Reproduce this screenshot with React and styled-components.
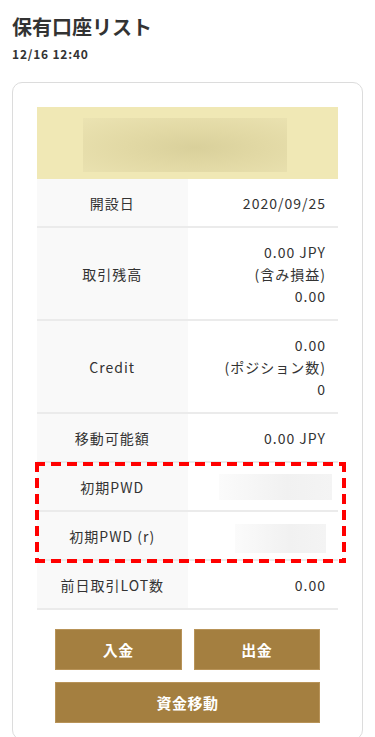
import React from "react";
import styled, { createGlobalStyle } from "styled-components";

const GlobalStyle = createGlobalStyle`
  body {
    margin: 0;
    background: #fff;
    font-family: "Noto Sans CJK JP", "Noto Sans", sans-serif;
    color: #333;
  }
`;

const Page = styled.div`
  padding: 14px 12px 20px;
`;

const Title = styled.h1`
  margin: 0;
  font-size: 20px;
  line-height: 26px;
  font-weight: 700;
  color: #333;
`;

const Stamp = styled.div`
  margin-top: 6px;
  font-size: 12px;
  line-height: 15px;
  font-weight: 700;
  letter-spacing: 0.8px;
  color: #333;
`;

const Card = styled.div`
  margin-top: 21px;
  border: 1px solid #dcdcdc;
  border-radius: 10px;
  padding: 24px 24px 16px;
`;

const Header = styled.div`
  height: 72px;
  background: #f0e8b5;
  display: flex;
  align-items: flex-start;
  padding: 11px 0 0 46px;
  box-sizing: border-box;
`;

const HeaderBlur = styled.div`
  width: 204px;
  height: 54px;
  background: radial-gradient(ellipse at 55% 55%, #d9d09b 0%, #e2d9a5 45%, #ebe3b2 100%);
`;

const Row = styled.div`
  display: grid;
  grid-template-columns: 1fr 1fr;
  border-bottom: 2px solid #ebebeb;
`;

const Label = styled.div`
  background: #f9f9f9;
  display: flex;
  align-items: center;
  justify-content: center;
  font-size: 14px;
  letter-spacing: 1px;
  padding: 12.5px 0;
  line-height: 22px;
`;

const Value = styled.div`
  display: flex;
  flex-direction: column;
  justify-content: center;
  align-items: flex-end;
  padding: 12.5px 12px 12.5px 0;
  font-size: 14px;
  line-height: 22px;
  letter-spacing: 1px;
  text-align: right;
`;

const Masked = styled.div`
  width: ${(p) => p.w}px;
  height: ${(p) => p.h}px;
  margin: ${(p) => `${p.mt}px ${p.mr}px ${22 - p.h - p.mt}px 0`};
  background: linear-gradient(90deg, #fbfbfb 0%, #f1f1f1 60%, #f4f4f4 100%);
`;

const dash = "#f00 0 10px, transparent 10px 16px";

const Marked = styled.div`
  position: relative;
  &::after {
    content: "";
    position: absolute;
    left: -2px;
    right: -8px;
    top: -1px;
    bottom: -2px;
    pointer-events: none;
    background:
      repeating-linear-gradient(90deg, ${dash}) top left / 100% 4px no-repeat,
      repeating-linear-gradient(90deg, ${dash}) bottom left / 100% 4px no-repeat,
      repeating-linear-gradient(180deg, ${dash}) top left / 4px 100% no-repeat,
      repeating-linear-gradient(180deg, ${dash}) top right / 4px 100% no-repeat;
  }
`;

const Actions = styled.div`
  display: grid;
  grid-template-columns: 1fr 1fr;
  gap: 12px;
  padding: 19px 18px 0;
`;

const Button = styled.button`
  grid-column: ${(p) => (p.wide ? "1 / span 2" : "auto")};
  height: 41px;
  background: #a47f40;
  border: 1px solid #b89358;
  color: #fff;
  font-family: "Noto Sans CJK JP", sans-serif;
  font-size: 15px;
  font-weight: 700;
  letter-spacing: 0.5px;
  padding: 0;
`;

const Field = ({ label, children }) => (
  <Row>
    <Label>{label}</Label>
    <Value>{children}</Value>
  </Row>
);

export default function App() {
  return (
    <Page>
      <GlobalStyle />
      <Title>保有口座リスト</Title>
      <Stamp>12/16 12:40</Stamp>
      <Card>
        <Header>
          <HeaderBlur />
        </Header>
        <Field label="開設日">2020/09/25</Field>
        <Field label="取引残高">
          <span>0.00 JPY</span>
          <span>(含み損益)</span>
          <span>0.00</span>
        </Field>
        <Field label="Credit">
          <span>0.00</span>
          <span>(ポジション数)</span>
          <span>0</span>
        </Field>
        <Field label="移動可能額">0.00 JPY</Field>
        <Marked>
          <Field label="初期PWD">
            <Masked w={113} h={26} mt={-2} mr={-6} />
          </Field>
          <Field label="初期PWD (r)">
            <Masked w={91} h={29} mt={-1} mr={0} />
          </Field>
        </Marked>
        <Field label="前日取引LOT数">0.00</Field>
        <Actions>
          <Button>入金</Button>
          <Button>出金</Button>
          <Button wide>資金移動</Button>
        </Actions>
      </Card>
    </Page>
  );
}
